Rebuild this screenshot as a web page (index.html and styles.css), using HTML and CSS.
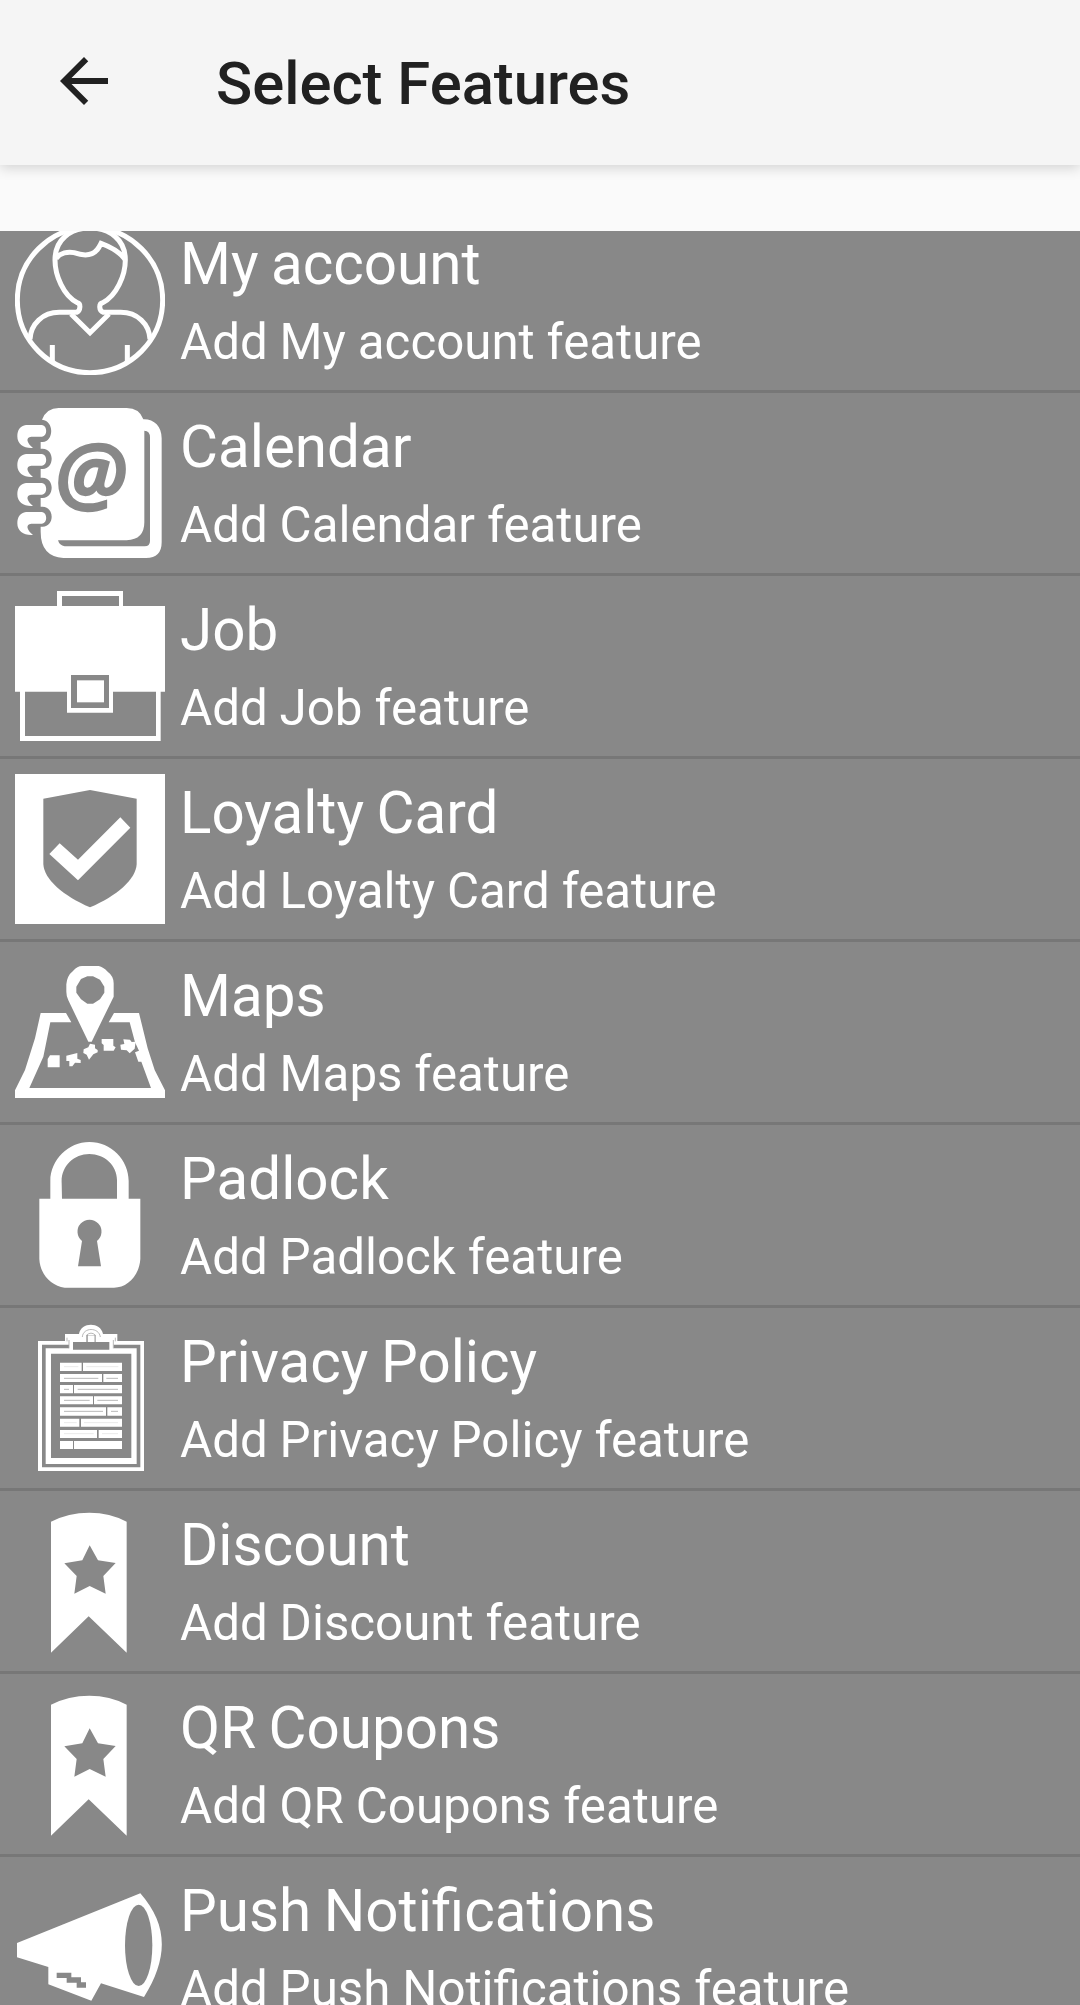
FILE: index.html
```html
<!DOCTYPE html>
<html lang="en">
<head>
<meta charset="utf-8">
<title>Select Features</title>
<link rel="stylesheet" href="styles.css">
</head>
<body>
<div class="screen">
  <header class="toolbar">
    <svg class="back" viewBox="0 0 24 24"><path d="M20 11H7.83l5.59-5.59L12 4l-8 8 8 8 1.41-1.41L7.83 13H20v-2z"/></svg>
    <h1 class="heading">Select Features</h1>
  </header>
  <main class="viewport">
    <ul class="list">
      <li class="row">
        <svg class="icon line" viewBox="45 15 450 450">
          <circle cx="270" cy="240" r="218"/>
          <path d="M90 358C92 312 128 277 178 277H230C242 272 243 250 232 248C190 228 165 165 165 120C165 60 210 24 270 24C330 24 376 60 376 120C376 165 350 228 308 248C296 250 296 272 310 277H362C412 277 448 312 450 358"/>
          <path d="M168 116C180 98 205 94 222 98C245 106 262 107 276 101C292 94 296 84 303 70C330 80 358 94 375 118"/>
          <path d="M213 282L270 338L327 282M157 375V428M382 375V428"/>
        </svg>
        <div class="text"><h2 class="name">My account</h2><p class="hint">Add My account feature</p></div>
      </li>
      <li class="row">
        <svg class="icon" viewBox="45 39 450 450">
          <path d="M126 74Q140 39 176 39H380Q418 39 430 73C462 72 485 94 485 130V442Q485 489 438 489H190Q122 484 122 410V395H128C163 395 165 337 128 335H122V309H128C163 307 165 250 128 248H122V222H128C163 220 165 163 128 161H122V141H128C160 141 165 78 126 74Z"/>
          <g id="rings"><path id="ring" d="M78 90H126C143 92 143 124 126 125H94C76 127 80 143 99 159C72 161 52 148 52 124C52 104 61 93 78 90Z"/>
          <use href="#ring" y="87"/><use href="#ring" y="174"/><use href="#ring" y="261"/></g>
          <path class="cut" d="M433 107Q450 108 450 127V438Q450 454 434 454H194Q178 451 174 436H380Q433 434 433 382Z"/>
          <text class="cut at" x="166" y="325">@</text>
        </svg>
        <div class="text"><h2 class="name">Calendar</h2><p class="hint">Add Calendar feature</p></div>
      </li>
      <li class="row">
        <svg class="icon" viewBox="45 48 450 450">
          <path d="M171 93V48H369V93H495V350H482V498H60V350H45V93ZM186 93H357V63H186Z" fill-rule="evenodd"/>
          <path class="cut" d="M75 350H201V413H339V350H468V483H75ZM213 300H327V399H213Z"/>
          <path d="M231 316H312V382H231Z"/>
        </svg>
        <div class="text"><h2 class="name">Job</h2><p class="hint">Add Job feature</p></div>
      </li>
      <li class="row">
        <svg class="icon" viewBox="45 42 450 450">
          <path d="M45 42H495V492H45Z"/>
          <path class="cut" d="M270 90L410 116V312C408 358 350 408 270 442C190 408 132 358 130 312V116Z"/>
          <path d="M148 282L179 250L234 299L361 172L391 203L234 361Z"/>
        </svg>
        <div class="text"><h2 class="name">Loyalty Card</h2><p class="hint">Add Loyalty Card feature</p></div>
      </li>
      <li class="row">
        <svg class="icon" viewBox="45 36 450 450">
          <path fill-rule="evenodd" d="M265 290L205 166Q199 155 199 140V118Q201 92 219 78Q232 63 246 63H296Q310 66 323 80Q341 93 341 115V155L275 290ZM262 94L243 102L229 125V143L243 163L262 176H279L300 163L313 143V125L300 104L279 94Z"/>
          <path d="M122 204H198L214 232H151L130 335L88 429H453L424 350H415L405 322L417 317L405 292L389 232H326L342 204H417L443 310L464 375L495 436V459H45V436L75 375L105 280Z"/>
          <path d="M150 331H179V367H143V342ZM199 332L232 324V341L242 345V354L225 353L217 364H208V348H199ZM251 313L265 307L270 296L285 299V310L293 315V322L280 328L267 344L260 329L250 324ZM305 282H340V302L347 307L341 317H311V300L305 295ZM361 299L373 297L370 283L390 284L395 291L407 290L404 311L389 325L380 316L363 314Z"/>
        </svg>
        <div class="text"><h2 class="name">Maps</h2><p class="hint">Add Maps feature</p></div>
      </li>
      <li class="row">
        <svg class="icon" viewBox="45 45 450 450">
          <path d="M118 221H151V168C151 104 206 51 268 51C333 51 386 104 386 168V221H421V402C418 452 382 488 342 488H194C154 483 120 448 118 402ZM186 221H351V165C351 121 313 87 268 87C221 87 182 125 185 174Z" fill-rule="evenodd"/>
          <path class="cut" d="M246 348A36 36 0 1 1 291 348L303 424H234Z"/>
        </svg>
        <div class="text"><h2 class="name">Padlock</h2><p class="hint">Add Padlock feature</p></div>
      </li>
      <li class="row">
        <svg class="icon" viewBox="45 39 450 450">
          <path d="M114 93H195V72H237C243 35 302 35 309 72H352V93H432V483H114Z"/>
          <path class="cut" d="M126 104H207V115H137V462H410V115H341V104H421V472H126Z"/>
          <path class="cut" d="M153 131H394V444H153ZM219 96H328V119H219ZM260 75H286V96H260Z"/>
          <path d="M263 76H284V96H263Z"/>
          <path class="seam" d="M247 81C249 51 297 51 301 81M260 96V75Q273 64 286 75V96M201 83V94M346 83V94M207 90V115M340 90V115"/>
          <path d="M180 158H245V183H180ZM249 158H366V183H249ZM180 192H306V216H180ZM310 192H366V216H310ZM180 225H219V250H180ZM222 225H366V250H222ZM180 259H279V283H180ZM282 259H366V283H282ZM180 292H318V317H180ZM322 292H366V317H322ZM180 326H238V350H180ZM243 326H366V350H243ZM180 360H291V384H180ZM296 360H366V384H296ZM180 393H219V417H180ZM222 393H366V417H222Z"/>
          <path class="faint" d="M192 170H235M259 170H355M192 338H230M252 338H354M192 371H281M306 371H354"/>
          <path class="seam" d="M192 205H295M319 205H354M192 238H207M233 238H354M192 271H269M292 271H354M192 304H309M333 304H354"/>
        </svg>
        <div class="text"><h2 class="name">Privacy Policy</h2><p class="hint">Add Privacy Policy feature</p></div>
      </li>
      <li class="row">
        <svg class="icon" viewBox="45 48 450 450">
          <path id="ribbon" fill-rule="evenodd" d="M153 95Q205 68 268 68Q330 68 380 95V488L266 379L153 488ZM269 166L247 211L193 220L230 258L223 311L269 288L317 311L310 258L347 219L294 211Z"/>
        </svg>
        <div class="text"><h2 class="name">Discount</h2><p class="hint">Add Discount feature</p></div>
      </li>
      <li class="row">
        <svg class="icon" viewBox="45 48 450 450"><use href="#ribbon"/></svg>
        <div class="text"><h2 class="name">QR Coupons</h2><p class="hint">Add QR Coupons feature</p></div>
      </li>
      <li class="row">
        <svg class="icon" viewBox="45 81 450 450">
          <path d="M51 294L421 145C505 240 505 340 432 456L303 415L274 467L145 418V366L51 337Z"/>
          <ellipse class="cut" cx="416" cy="301" rx="41" ry="122"/>
          <path class="cut" d="M170 383H214V397H243V412H258V428H230V413H200V399H170Z"/>
        </svg>
        <div class="text"><h2 class="name">Push Notifications</h2><p class="hint">Add Push Notifications feature</p></div>
      </li>
    </ul>
  </main>
</div>
</body>
</html>
```
FILE: styles.css
```css
* { box-sizing: border-box; margin: 0; padding: 0; }
body { background: #fafafa; font-family: Roboto, sans-serif; }
.screen { display: flex; flex-direction: column; height: 2005px; overflow: hidden; }
.toolbar {
  flex: none;
  display: flex;
  align-items: center;
  height: 165px;
  padding: 0 48px 3px;
  background: #f5f5f5;
  box-shadow: 0 3px 12px rgba(0, 0, 0, .16);
}
.back { width: 72px; height: 72px; fill: #212121; }
.heading { margin-left: 96px; padding-top: 5px; font-size: 59.75px; line-height: 70px; font-weight: 500; color: #212121; white-space: nowrap; }
.viewport { flex: 1; min-height: 0; margin-top: 66px; overflow: hidden; background: #888; }
.list { margin-top: -21px; list-style: none; }
.row {
  display: flex;
  gap: 15px;
  height: 183px;
  padding: 15px 15px 0;
  border-bottom: 3px solid #777;
}
.icon { flex: none; width: 150px; height: 150px; fill: #fff; }
.line { fill: none; stroke: #fff; stroke-width: 15; overflow: hidden; }
.cut { fill: #888; }
.at { font: italic 600 250px "Open Sans", sans-serif; stroke: #888; stroke-width: 7; }
.seam { fill: none; stroke: #aaa; stroke-width: 2.5; }
.faint { fill: none; stroke: #e4e4e4; stroke-width: 2.5; }
.text { padding-top: 4px; color: #fff; white-space: nowrap; }
.name { font-size: 58.35px; line-height: 70px; font-weight: 400; word-spacing: -2px; }
.hint { margin-top: 13px; font-size: 49.25px; line-height: 60px; word-spacing: -.3px; }
```
